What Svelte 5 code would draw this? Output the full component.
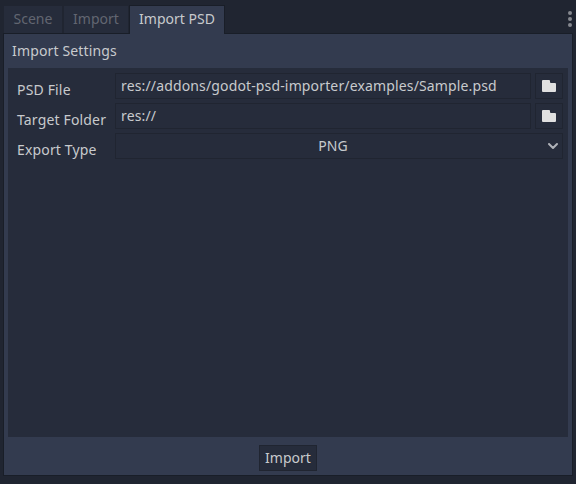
<script>
  const tabs = ['Scene', 'Import', 'Import PSD'];
  let active = $state(2);
  let files = $state([
    { label: 'PSD File', value: 'res://addons/godot-psd-importer/examples/Sample.psd' },
    { label: 'Target Folder', value: 'res://' }
  ]);
</script>

<div class="dock">
  <div class="tabs">
    {#each tabs as tab, i}
      <button class="tab" class:active={active === i} onclick={() => (active = i)}><span>{tab}</span></button>
    {/each}
    <svg class="dots" width="6" height="18" viewBox="0 0 6 18">
      <circle cx="3" cy="3" r="2" /><circle cx="3" cy="9" r="2" /><circle cx="3" cy="15" r="2" />
    </svg>
  </div>
  <div class="panel">
    <div class="title">Import Settings</div>
    <div class="settings">
      {#each files as file}
        <div class="row">
          <span class="label">{file.label}</span>
          <div class="box field"><span>{file.value}</span></div>
          <button class="box browse" aria-label="Browse">
            <svg width="14" height="12" viewBox="0 0 14 12">
              <path d="M1 0H7Q8 0 8 1V2Q8 3 9 3H13Q14 3 14 4V11Q14 12 13 12H1Q0 12 0 11V1Q0 0 1 0Z" />
            </svg>
          </button>
        </div>
      {/each}
      <div class="row">
        <span class="label">Export Type</span>
        <button class="box option">
          <span>PNG</span>
          <svg width="12" height="8" viewBox="0 0 12 8"><path d="M2 2L6 6L10 2" /></svg>
        </button>
      </div>
    </div>
    <div class="footer"><button class="box import"><span>Import</span></button></div>
  </div>
</div>

<style>
  :global(body) { margin: 0; background: #202531; }
  .dock {
    box-sizing: border-box;
    width: 576px;
    height: 484px;
    padding: 5px 3px 8px;
    display: flex;
    flex-direction: column;
    background: #202531;
    color: #c8cacd;
    font: 14px/20px 'Noto Sans', sans-serif;
    white-space: nowrap;
  }
  button { font: inherit; color: inherit; margin: 0; padding: 0; border: 0; border-radius: 0; }
  .tabs { display: flex; height: 28px; padding-left: 1px; }
  .tab {
    box-sizing: border-box;
    width: 58px;
    height: 27px;
    margin: 1px 2px 0 0;
    background: #262c3b;
    color: #626671;
  }
  .tab:nth-child(2) { width: 64px; margin-right: 1px; }
  .tab.active {
    width: 96px;
    height: 29px;
    margin: 0;
    border: 1px solid #191e28;
    border-bottom: 0;
    background: #333b4f;
    color: #c8cacd;
    position: relative;
    z-index: 1;
  }
  .tab span { display: block; line-height: 20px; padding-bottom: 1px; }
  .tab.active span { padding-bottom: 3px; }
  .dots { margin: 5px 0 0 auto; fill: #85888f; }
  .panel {
    box-sizing: border-box;
    flex: 1;
    display: flex;
    flex-direction: column;
    padding: 0 4px;
    border: 1px solid #191e28;
    background: #333b4f;
  }
  .title { height: 34px; line-height: 34px; padding-left: 4px; letter-spacing: 0.15px; }
  .settings {
    box-sizing: border-box;
    height: 369px;
    padding: 5px 5px 0 9px;
    display: flex;
    flex-direction: column;
    gap: 4px;
    background: #262c3b;
  }
  .row { display: flex; gap: 4px; height: 26px; }
  .label { width: 94px; line-height: 34px; letter-spacing: 0.16px; }
  .box { box-sizing: border-box; border: 1px solid #202531; background: #262c3b; }
  .field { flex: 1; padding-left: 5px; line-height: 24px; letter-spacing: 0.145px; }
  .browse { width: 28px; display: grid; place-items: center; fill: #e0e0e0; }
  .browse svg { display: block; }
  .option { flex: 1; display: flex; align-items: center; padding: 0 3px 0 17px; }
  .option span { flex: 1; text-align: center; padding-right: 14px; }
  .option svg { fill: none; stroke: #b0b3b9; stroke-width: 2; stroke-linecap: round; stroke-linejoin: round; }
  .footer { height: 38px; display: flex; justify-content: center; align-items: flex-end; padding-bottom: 4px; box-sizing: border-box; }
  .import { width: 58px; height: 26px; }
</style>
